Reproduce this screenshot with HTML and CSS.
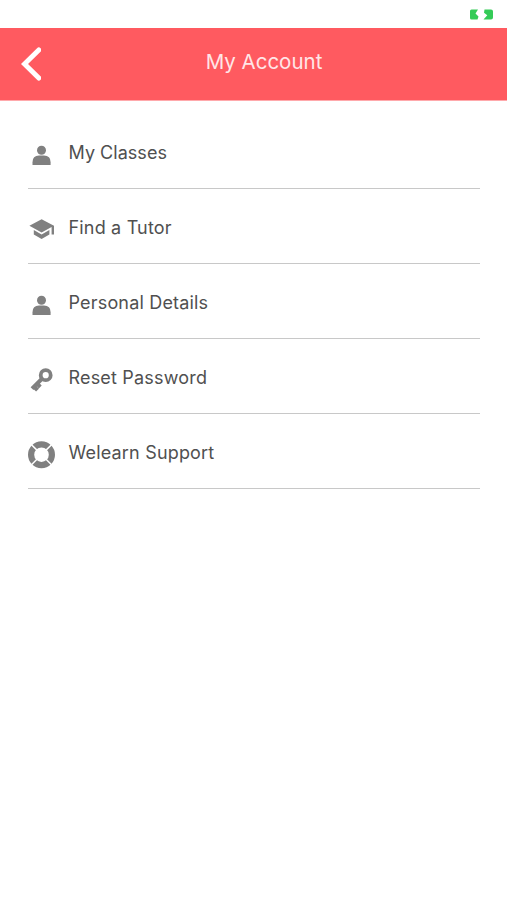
FILE: index.html
```html
<!DOCTYPE html>
<html lang="en">
  <head>
    <meta charset="UTF-8" />
    <meta name="viewport" content="width=device-width, initial-scale=1.0" />
    <title>My Account</title>
    <link rel="stylesheet" href="styles.css">
  </head>
  <body>
    <div class="status-bar">
      <svg class="battery" viewBox="0 0 24 11">
        <path d="M2.5 0.5H9L6.5 4.5 9.5 7.5 8.5 10.5H2.5Q1 10.5 1 9V2Q1 0.5 2.5 0.5Z" />
        <path d="M15.5 0.5H22Q24 0.5 24 2.5V8.5Q24 10.5 22 10.5H14.5L18.3 6.2 15 3.8Z" />
      </svg>
    </div>

    <header class="header">
      <button class="back-button" aria-label="Back">
        <svg viewBox="0 0 20 34">
          <path d="M17.8 3L3.5 17 17.8 31" />
        </svg>
      </button>
      <h1 class="title">My Account</h1>
    </header>

    <nav class="menu">
      <a class="menu-item">
        <svg class="icon" viewBox="0 0 28 28">
          <circle cx="13.5" cy="9.2" r="4.5" />
          <path d="M4.5 24V21.2Q4.5 14.5 11 14.5H16Q22.6 14.5 22.6 21.2V24Z" />
        </svg>
        <span class="classes">My Classes</span>
      </a>
      <a class="menu-item">
        <svg class="icon" viewBox="0 0 28 28">
          <path d="M13.6 3.2L1.4 9.8 13.6 16.5 23.6 11.1V18.5H26V9.8Z" />
          <path d="M5.8 14.1V18.6L13.6 23.1 21.4 18.6V14.1L13.6 18.4Z" />
        </svg>
        <span>Find a Tutor</span>
      </a>
      <a class="menu-item">
        <svg class="icon" viewBox="0 0 28 28">
          <circle cx="13.5" cy="9.2" r="4.5" />
          <path d="M4.5 24V21.2Q4.5 14.5 11 14.5H16Q22.6 14.5 22.6 21.2V24Z" />
        </svg>
        <span>Personal Details</span>
      </a>
      <a class="menu-item">
        <svg class="icon" viewBox="0 0 28 28">
          <circle class="key-bow" cx="17.7" cy="9.2" r="5" />
          <path class="key-blade" d="M14 12.8L4 22.6M5.8 20.5L9.5 24.2M9 17.7L12.3 21" />
        </svg>
        <span>Reset Password</span>
      </a>
      <a class="menu-item">
        <svg class="icon" viewBox="0 0 28 28">
          <circle class="ring" cx="13.5" cy="13.7" r="10.4" />
          <path class="gap" d="M3 3.2L9.2 9.4M24 3.2L17.8 9.4M3 24.2L9.2 18M24 24.2L17.8 18" />
        </svg>
        <span>Welearn Support</span>
      </a>
    </nav>
  </body>
</html>
```

FILE: styles.css
```css
body {
  margin: 0;
  min-height: 100vh;
  background-color: #fff;
  color: #505050;
  font-family: Inter, "Liberation Sans", sans-serif;
}

.status-bar {
  height: 28px;
  display: flex;
  justify-content: flex-end;
  align-items: flex-start;
  padding: 9px 14px 0 0;
  box-sizing: border-box;
}

.battery {
  width: 24px;
  height: 11px;
  fill: #34cb57;
}

.header {
  height: 73px;
  display: grid;
  grid-template-columns: 60px 1fr 60px;
  align-items: center;
  background-color: #ff5a60;
  border-bottom: 1px solid #ffa9ac;
  box-sizing: border-box;
}

.back-button {
  display: block;
  padding: 0 0 0 21px;
  border: 0;
  background: none;
  cursor: pointer;
}

.back-button svg {
  display: block;
  width: 20px;
  height: 34px;
  fill: none;
  stroke: #fff;
  stroke-width: 5;
  stroke-linecap: round;
}

.title {
  margin: 0 0 4px;
  padding-left: 21px;
  color: #ffe6e7;
  font-size: 20.5px;
  font-weight: 400;
  line-height: 24px;
  text-align: center;
}

.menu {
  display: flex;
  flex-direction: column;
  padding: 13px 27px 0 28px;
}

.menu-item {
  height: 75.1px;
  display: flex;
  align-items: center;
  gap: 12.5px;
  border-bottom: 1px solid #c8c8c8;
  box-sizing: border-box;
  font-size: 18px;
  letter-spacing: 0.18px;
  line-height: 24px;
}

.menu-item span {
  margin-top: 4px;
}

.menu-item .classes {
  letter-spacing: 0.03px;
}

.icon {
  width: 28px;
  height: 28px;
  margin-top: 7px;
  fill: #808080;
}

.key-bow,
.key-blade,
.ring,
.gap {
  fill: none;
  stroke: #808080;
}

.key-bow {
  stroke-width: 3.8;
}

.key-blade {
  stroke-width: 4;
}

.ring {
  stroke-width: 6.2;
}

.gap {
  stroke: #fff;
  stroke-width: 1.5;
}
```
